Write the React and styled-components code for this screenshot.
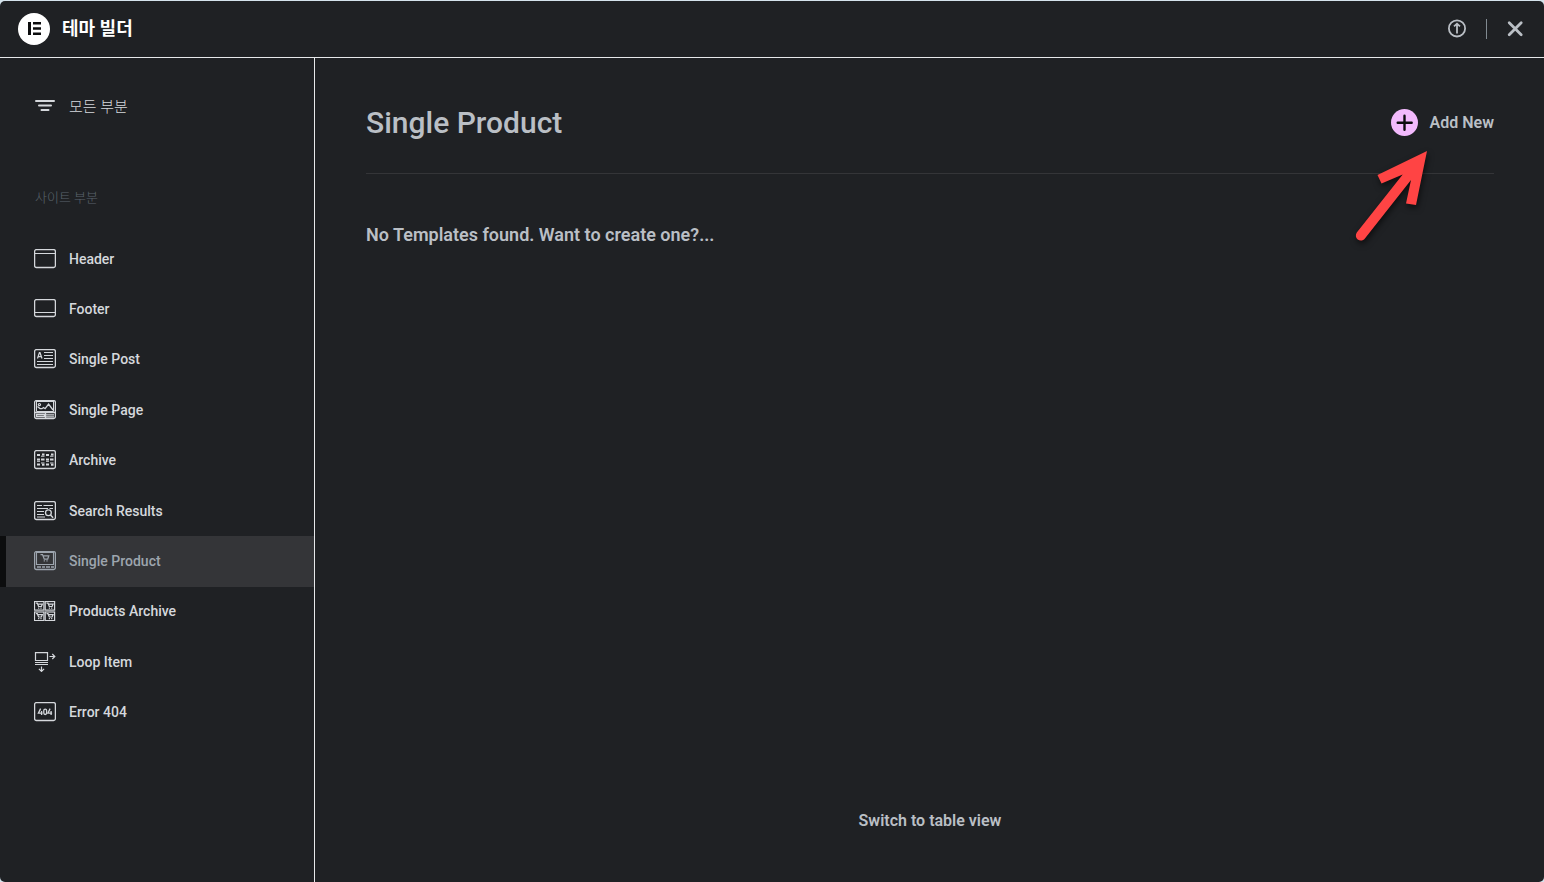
import React from "react";
import styled, { createGlobalStyle } from "styled-components";

const GlobalStyle = createGlobalStyle`
  *, *::before, *::after { box-sizing: border-box; }
  body {
    margin: 0;
    background: #d5e3ec;
    font-family: Roboto, "Noto Sans CJK KR", sans-serif;
    font-weight: 500;
  }
  h1, h2, p, ul { margin: 0; padding: 0; font-weight: 500; }
  ul { list-style: none; }
  a { color: inherit; text-decoration: none; }
  button {
    border: 0;
    padding: 0;
    background: none;
    color: inherit;
    font: inherit;
    cursor: pointer;
  }
  svg { display: block; flex: none; }
`;

const Page = styled.div`
  min-height: 100vh;
  padding-top: 1px;
  display: flex;
`;

const Modal = styled.div`
  flex: 1;
  display: flex;
  flex-direction: column;
  border-radius: 5px;
  overflow: hidden;
  background: #1f2124;
`;

const TopBar = styled.header`
  display: flex;
  align-items: center;
  justify-content: space-between;
  height: 57px;
  padding: 0 20px 1px 18px;
  border-bottom: 1px solid #e6e8ea;
`;

const Brand = styled.div`
  display: flex;
  align-items: center;
  gap: 12px;
`;

const BrandTitle = styled.h1`
  font-size: 18px;
  line-height: 24px;
  font-weight: 700;
  color: #fff;
`;

const TopActions = styled.div`
  display: flex;
  align-items: center;
  gap: 19px;
  color: #babfc5;
`;

const Divider = styled.span`
  width: 1px;
  height: 20px;
  background: #818a91;
`;

const Body = styled.div`
  flex: 1;
  display: flex;
`;

const Sidebar = styled.nav`
  flex: none;
  width: 315px;
  border-right: 1px solid #e6e8ea;
  padding-top: 24px;
`;

const AllParts = styled.a`
  display: flex;
  align-items: center;
  gap: 13px;
  height: 48px;
  padding: 0 0 2px 35px;
  font-size: 15px;
  font-weight: 300;
  color: #d5d8dc;
`;

const GroupTitle = styled.h2`
  margin: 56px 0 24px 35px;
  font-size: 13px;
  line-height: 24px;
  font-weight: 300;
  color: #5a636d;
`;

const Menu = styled.ul`
  display: grid;
  grid-auto-rows: 1fr;
  height: 504px;
`;

const MenuLink = styled.a`
  display: flex;
  align-items: center;
  gap: 13px;
  height: 100%;
  padding: 0 0 1px 28px;
  border-left: 6px solid ${(p) => (p.$active ? "#0c0d0e" : "transparent")};
  background: ${(p) => (p.$active ? "#343538" : "transparent")};
  background-clip: padding-box;
  font-size: 14px;
  color: ${(p) => (p.$active ? "#9da5ae" : "#d5d8dc")};
`;

const Main = styled.main`
  flex: 1;
  display: flex;
  flex-direction: column;
  padding: 40px 50px 47px 51px;
  color: #babfc5;
`;

const Heading = styled.div`
  position: relative;
  display: flex;
  align-items: center;
  justify-content: space-between;
  height: 76px;
  padding-bottom: 26px;
  border-bottom: 1px solid #343538;
`;

const SectionTitle = styled.h2`
  font-size: 30px;
  line-height: 40px;
`;

const AddButton = styled.button`
  display: flex;
  align-items: center;
  gap: 12px;
  && { font-size: 16px; font-weight: 600; }
`;

const Pointer = styled.svg`
  position: absolute;
  top: 50px;
  right: 56px;
  pointer-events: none;
  filter: drop-shadow(1px 3px 3px rgba(0, 0, 0, 0.6));
`;

const Empty = styled.p`
  margin-top: 48px;
  font-size: 18px;
  line-height: 26px;
  && { font-weight: 600; }
`;

const SwitchView = styled.button`
  align-self: center;
  margin-top: auto;
  && { font-size: 16px; line-height: 28px; font-weight: 600; }
`;

const Icon = ({ children }) => (
  <svg width="22" height="20" viewBox="0 0 22 20" fill="none" stroke="currentColor" strokeWidth="1" aria-hidden="true">
    {children}
  </svg>
);

const Frame = () => <rect x="0.6" y="0.6" width="20.8" height="17.9" rx="1.8" strokeWidth="1.3" />;

const Cart = ({ x, y }) => (
  <path strokeWidth="1.2" d={`M${x} ${y}h2l1.8 4.6h3.4l1.1-3.4h-5.8M${x + 3.2} ${y + 6.2}h1.2M${x + 5.9} ${y + 6.2}h1.2`} />
);

const SmallCart = ({ x, y }) => (
  <path strokeWidth="1.2" d={`M${x} ${y}h1.5l1.3 3.3h2.8l1-2.4h-4.4M${x + 2.3} ${y + 5}h1.2M${x + 4.6} ${y + 5}h1.2`} />
);

const icons = {
  header: <><Frame /><path d="M1 4.5h20" /></>,
  footer: <><rect x="0.6" y="0.6" width="20.8" height="16.9" rx="1.8" strokeWidth="1.3" /><path d="M1 13.5h20" /></>,
  post: (
    <>
      <Frame />
      <path strokeWidth="1.2" d="M3.5 9.5 5.4 3.7h.6L8 9.5M4.3 7.6h3M10 3.5h9M10 6.5h9M10 9.5h9M3 12.5h16M3 15.5h16" />
    </>
  ),
  page: (
    <>
      <Frame />
      <path d="M2 1.5h18M2.5 1v10.5h17V1" />
      <circle cx="5.4" cy="4.6" r="1.1" strokeWidth="1.2" />
      <path strokeWidth="1.3" d="m3.5 6.5 2.5 2 2 .2 1.5-1.2 1.6 1.2L14.6 4l4.4 6M1 12.5h20M2.5 14.5h8v2h-8zM12 14.8h8M12 16.8h8M11.5 13v5" />
    </>
  ),
  archive: (
    <>
      <Frame />
      <path
        strokeWidth="1.9"
        d="M3 5h3M8 4.5h2.5M12 5h3M17 4.5h2.5M3 9.5h3M7 9.5h3.5M12 9.5h3M16 9.5h3.5M3 14.5h3M8 14.8h2.5M12 14.5h3M17 14.8h2.5"
      />
      <path d="M7 6.2h3.5M16 6.2h3.5M7 13h3.5M16 13h3.5M3 11.3h3M12 11.3h3" />
    </>
  ),
  search: (
    <>
      <Frame />
      <path strokeWidth="1.1" d="M3 4.5h5M9.5 4.5h9.5M3 7.5h11M15.5 7.5h3.5M3 10.5h7M3 13.5h7M3 16h8" />
      <circle cx="14.4" cy="11.8" r="2.9" strokeWidth="1.3" />
      <path strokeWidth="1.4" d="m16.5 14 2.6 2.8" />
    </>
  ),
  product: (
    <>
      <Frame />
      <path strokeWidth="1.1" d="M2.5 1v12.5h17V1M2 1.4h18" />
      <path strokeWidth="1.4" d="M3 16h4M8 16h3M12 16h4M17 16h3" />
      <Cart x={6.5} y={3.6} />
    </>
  ),
  products: (
    <>
      {[[0.5, 0], [11.2, 0], [0.5, 10.5], [11.2, 10.5]].map(([x, y]) => (
        <g key={`${x}-${y}`}>
          <rect x={x} y={y + 0.5} width="9.4" height="8.6" strokeWidth="1.2" />
          <SmallCart x={x + 1.3} y={y + 2.2} />
        </g>
      ))}
    </>
  ),
  loop: (
    <g strokeWidth="1.2">
      <path d="M1.5.6h12v7.9h-12zM1 10.5h13M1 12.5h13M15.5 4.5h5M18.3 2l2.5 2.5L18.3 7M7.5 14.5v4.8M4.9 16.8l2.6 2.6 2.6-2.6" />
    </g>
  ),
  error: (
    <>
      <Frame />
      <path strokeWidth="1.3" d="M6.6 6.6 4.4 11.2h4.2M7.6 9v4.1M16.1 6.6l-2.2 4.6h4.2M17.1 9v4.1" />
      <rect x="9.8" y="7.2" width="2.8" height="5.3" rx="1.4" strokeWidth="1.3" />
    </>
  ),
};

const parts = [
  ["Header", "header"],
  ["Footer", "footer"],
  ["Single Post", "post"],
  ["Single Page", "page"],
  ["Archive", "archive"],
  ["Search Results", "search"],
  ["Single Product", "product"],
  ["Products Archive", "products"],
  ["Loop Item", "loop"],
  ["Error 404", "error"],
];

export default function App() {
  return (
    <Page>
      <GlobalStyle />
      <Modal>
        <TopBar>
          <Brand>
            <svg width="32" height="32" viewBox="0 0 32 32" aria-hidden="true">
              <circle cx="16" cy="16" r="16" fill="#fff" />
              <path fill="#0c0d0e" d="M10 9h3v13h-3zM15 9h8v2.6h-8zM15 14.2h8v2.6h-8zM15 19.4h8V22h-8z" />
            </svg>
            <BrandTitle>테마 빌더</BrandTitle>
          </Brand>
          <TopActions>
            <button aria-label="Import">
              <svg width="20" height="20" viewBox="0 0 20 20" fill="none" stroke="currentColor" strokeWidth="1.8">
                <circle cx="10" cy="9.4" r="8.1" />
                <path d="M10 14.5V5.5M7 7.4l3-2.7 3 2.7" />
              </svg>
            </button>
            <Divider />
            <button aria-label="Close">
              <svg width="18" height="18" viewBox="0 0 18 18" fill="none" stroke="currentColor" strokeWidth="2.8" strokeLinecap="round">
                <path d="m3.2 2.8 12 12M15.2 2.8l-12 12" />
              </svg>
            </button>
          </TopActions>
        </TopBar>
        <Body>
          <Sidebar>
            <AllParts href="#all">
              <svg width="21" height="12" viewBox="0 0 21 12" fill="none" stroke="currentColor" strokeWidth="2" strokeLinecap="round">
                <path d="M1 2h18M4 6.5h12M6.5 11h7" />
              </svg>
              모든 부분
            </AllParts>
            <GroupTitle>사이트 부분</GroupTitle>
            <Menu>
              {parts.map(([label, icon]) => (
                <li key={icon}>
                  <MenuLink href={`#${icon}`} $active={icon === "product"} aria-current={icon === "product" ? "page" : undefined}>
                    <Icon>{icons[icon]}</Icon>
                    {label}
                  </MenuLink>
                </li>
              ))}
            </Menu>
          </Sidebar>
          <Main>
            <Heading>
              <SectionTitle>Single Product</SectionTitle>
              <AddButton>
                <svg width="27" height="27" viewBox="0 0 27 27" aria-hidden="true">
                  <circle cx="13.5" cy="13.5" r="13.5" fill="#f3bafd" />
                  <path d="M13.5 6.8v14M6.7 13.8h14" stroke="#0c0d0e" strokeWidth="2.4" strokeLinecap="round" />
                </svg>
                Add New
              </AddButton>
              <Pointer width="88" height="102" viewBox="0 0 88 102" aria-hidden="true">
                <path
                  fill="#ff4444"
                  d="M77 3 27.5 27 31.5 35.5 52.7 26.5 6.8 84.5C5.3 86.5 5.6 90 7.7 91.4C10 93 13 92.8 14.9 90.4L61 32 56 55.5 66 57Z"
                />
              </Pointer>
            </Heading>
            <Empty>No Templates found. Want to create one?...</Empty>
            <SwitchView>Switch to table view</SwitchView>
          </Main>
        </Body>
      </Modal>
    </Page>
  );
}
